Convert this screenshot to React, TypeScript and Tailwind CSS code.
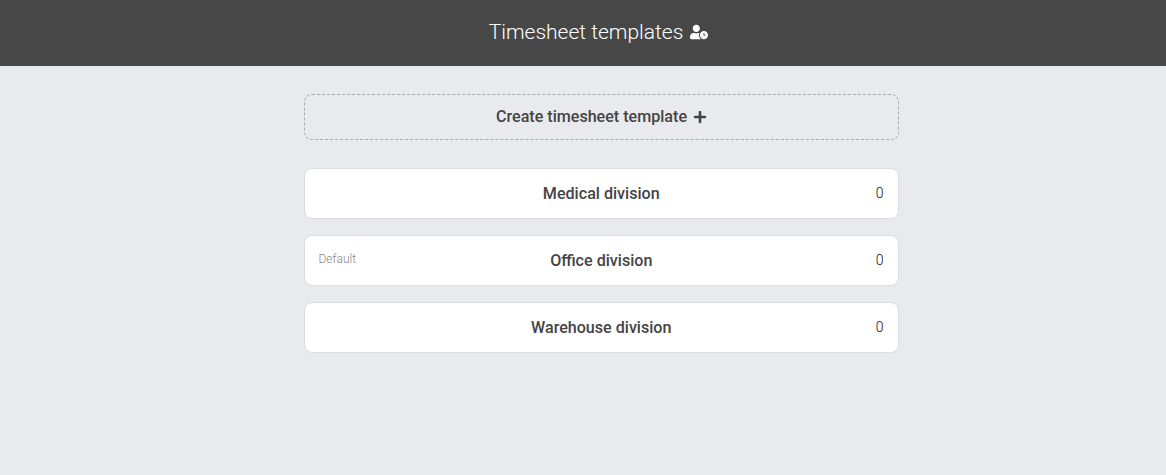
import { FaPlus, FaUserClock } from "react-icons/fa";

const templates = [
    { name: "Medical division", count: 0, isDefault: false },
    { name: "Office division", count: 0, isDefault: true },
    { name: "Warehouse division", count: 0, isDefault: false },
];

export default function App() {
    return (
        <div className="min-h-[475px] bg-[#e9eaee] font-['Roboto',sans-serif] text-[#444444]">
            <header className="flex h-[66px] items-center justify-center pl-[31px] bg-[#474747] text-white">
                <h1 className="text-[21px] font-light">Timesheet templates</h1>
                <FaUserClock className="mb-[2px] ml-[7px] text-[18px]" />
            </header>

            <main className="ml-[304px] flex w-[595px] flex-col pt-[28px]">
                <div className="mb-[28px] flex h-[46px] items-center justify-center rounded-lg border border-dashed border-[#aaaaaa] text-[16.1px] font-medium">
                    Create timesheet template
                    <FaPlus className="ml-[6px] text-[14px]" />
                </div>

                <div className="flex flex-col gap-[16px]">
                    {templates.map((template) => (
                        <div
                            key={template.name}
                            className="grid h-[51px] grid-cols-[1fr_auto_1fr] items-center rounded-lg border border-[#dcdcdc] bg-white pl-[13.5px] pr-[14px]"
                        >
                            <span className="mb-[4px] text-xs font-light text-[#888888]">
                                {template.isDefault ? "Default" : ""}
                            </span>
                            <span className="mt-[2px] text-[16.1px] font-medium">{template.name}</span>
                            <span className="mb-[1px] pr-[0.5px] text-right text-sm font-light text-[#111111]">{template.count}</span>
                        </div>
                    ))}
                </div>
            </main>
        </div>
    );
}
